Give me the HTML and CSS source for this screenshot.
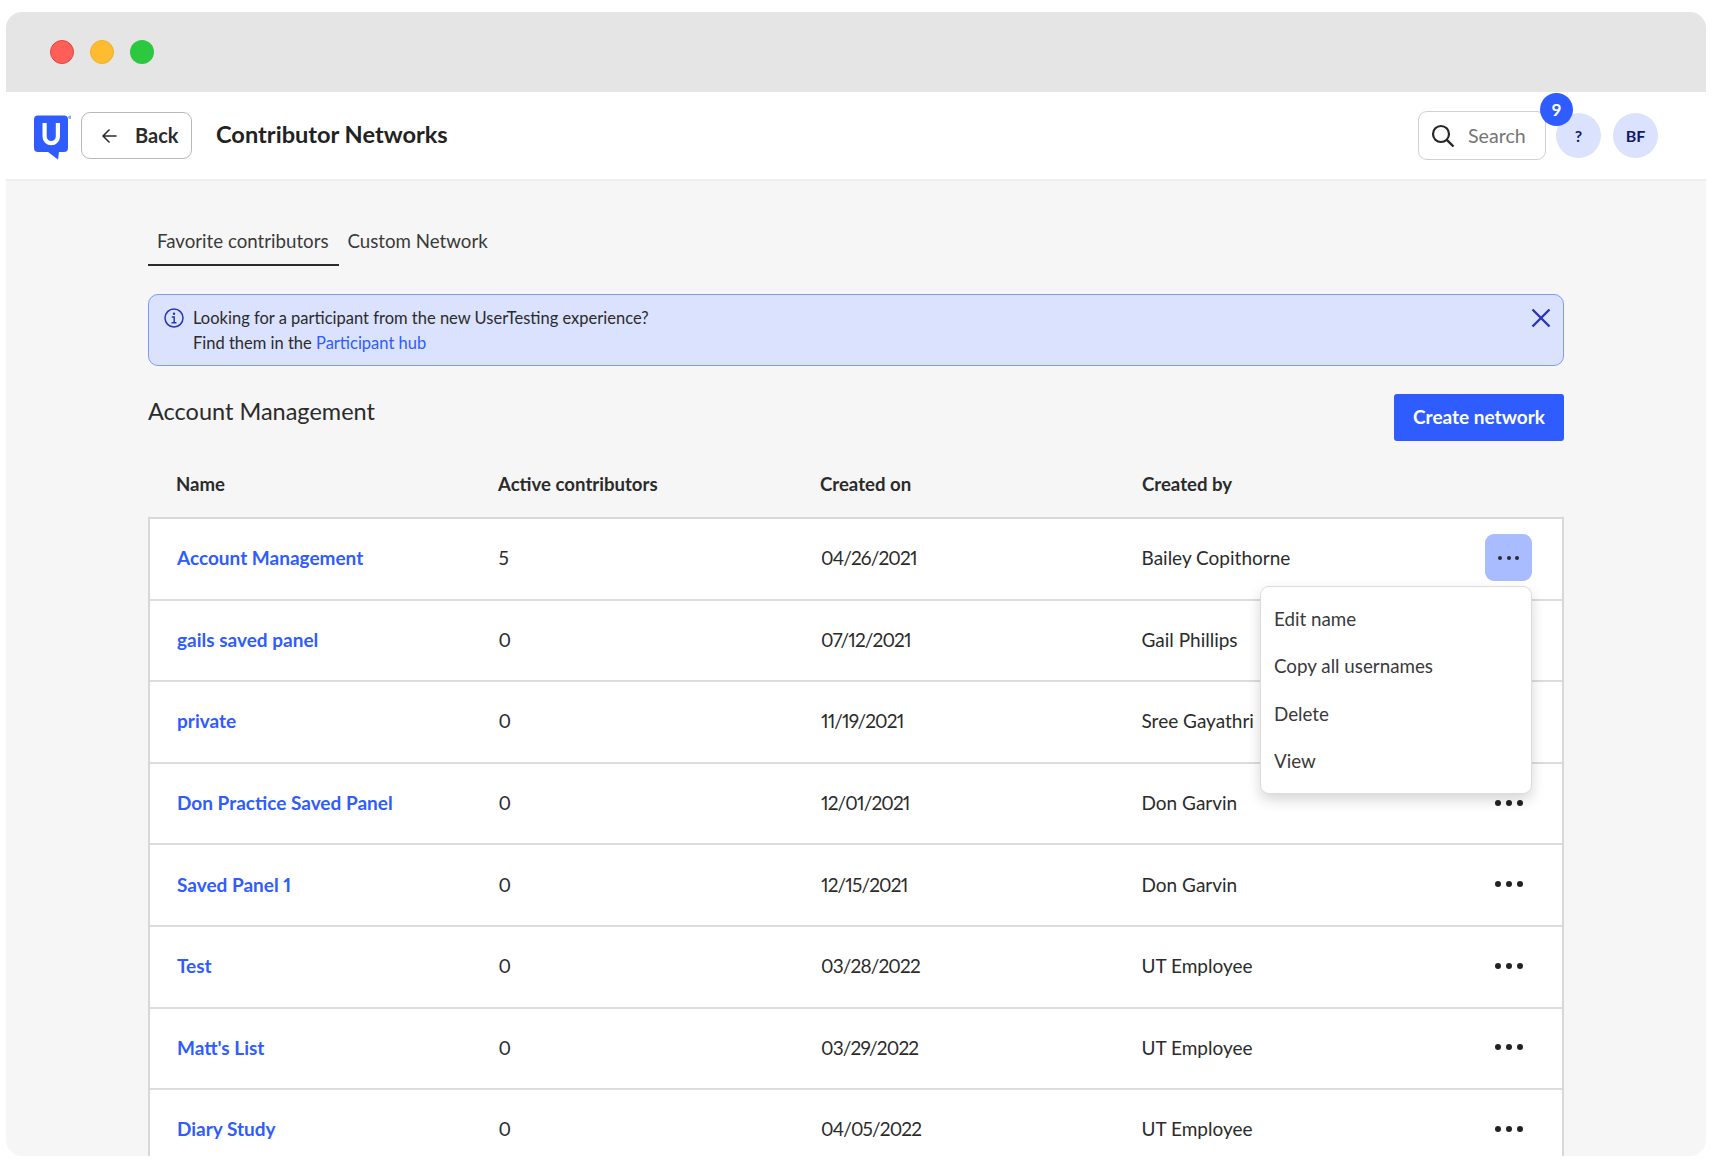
FILE: index.html
```html
<!DOCTYPE html>
<html lang="en">
<head>
    <meta charset="UTF-8">
    <meta name="viewport" content="width=device-width, initial-scale=1.0">
    <title>Contributor Networks</title>
    <link rel="stylesheet" href="styles.css">
</head>
<body>
    <div class="window">
        <div class="titlebar">
            <span class="light red"></span>
            <span class="light yellow"></span>
            <span class="light green"></span>
        </div>

        <header class="topbar">
            <svg class="logo" width="38" height="46" viewBox="0 0 38 46">
                <path fill="#2f5cff" d="M5 .5h26a4 4 0 0 1 4 4V33a4 4 0 0 1-4 4h-5l-1 7.500L15 37H5a4 4 0 0 1-4-4V4.500a4 4 0 0 1 4-4z"/>
                <path fill="none" stroke="#fff" stroke-width="4.200" d="M11.600 8v13.500a6.650 6.650 0 0 0 13.300 0V8"/>
                <circle cx="37" cy="2.300" r="1.800" fill="#8fa6ff"/>
            </svg>
            <button class="back-btn">
                <svg width="18" height="16" viewBox="0 0 18 16"><path fill="none" stroke="#2b2b2b" stroke-width="1.500" d="M15.500 8H2M8.500 1.500 2 8l6.500 6.500"/></svg>
                <span>Back</span>
            </button>
            <h1>Contributor Networks</h1>
            <div class="topbar-right">
                <div class="search">
                    <svg width="24" height="24" viewBox="0 0 24 24"><circle cx="10" cy="10" r="8" fill="none" stroke="#262626" stroke-width="2.200"/><path stroke="#262626" stroke-width="2.400" d="M15.800 15.800 22.500 22.500"/></svg>
                    <span>Search</span>
                </div>
                <div class="avatar">?</div>
                <div class="avatar">BF</div>
                <div class="badge">9</div>
            </div>
        </header>

        <main class="content">
            <nav class="tabs">
                <a class="tab active">Favorite contributors</a>
                <a class="tab">Custom Network</a>
            </nav>

            <div class="banner">
                <svg class="info" width="20" height="20" viewBox="0 0 20 20"><circle cx="10" cy="10" r="9" fill="none" stroke="#2536b8" stroke-width="1.500"/><circle cx="10" cy="5.800" r="1.200" fill="#2536b8"/><path fill="none" stroke="#2536b8" stroke-width="1.500" d="M7.800 9h2.400v5.500M7.500 14.700h5"/></svg>
                <p>Looking for a participant from the new UserTesting experience?<br>Find them in the <a>Participant hub</a></p>
                <svg class="close" width="20" height="20" viewBox="0 0 20 20"><path fill="none" stroke="#2536b8" stroke-width="2.400" d="M1.500 1.500l17 17M18.500 1.500l-17 17"/></svg>
            </div>

            <div class="section-head">
                <h2>Account Management</h2>
                <button class="create-btn">Create network</button>
            </div>

            <div class="row head">
                <div>Name</div>
                <div>Active contributors</div>
                <div>Created on</div>
                <div>Created by</div>
            </div>

            <div class="table">
                <div class="row">
                    <a class="name">Account Management</a><div>5</div><div class="date">04/26/2021</div><div>Bailey Copithorne</div>
                    <div class="more open"><i></i><i></i><i></i></div>
                </div>
                <div class="row">
                    <a class="name">gails saved panel</a><div>0</div><div class="date">07/12/2021</div><div>Gail Phillips</div>
                    <div class="more"><i></i><i></i><i></i></div>
                </div>
                <div class="row">
                    <a class="name">private</a><div>0</div><div class="date">11/19/2021</div><div>Sree Gayathri</div>
                    <div class="more"><i></i><i></i><i></i></div>
                </div>
                <div class="row">
                    <a class="name">Don Practice Saved Panel</a><div>0</div><div class="date">12/01/2021</div><div>Don Garvin</div>
                    <div class="more"><i></i><i></i><i></i></div>
                </div>
                <div class="row">
                    <a class="name">Saved Panel 1</a><div>0</div><div class="date">12/15/2021</div><div>Don Garvin</div>
                    <div class="more"><i></i><i></i><i></i></div>
                </div>
                <div class="row">
                    <a class="name">Test</a><div>0</div><div class="date">03/28/2022</div><div>UT Employee</div>
                    <div class="more"><i></i><i></i><i></i></div>
                </div>
                <div class="row">
                    <a class="name">Matt's List</a><div>0</div><div class="date">03/29/2022</div><div>UT Employee</div>
                    <div class="more"><i></i><i></i><i></i></div>
                </div>
                <div class="row">
                    <a class="name">Diary Study</a><div>0</div><div class="date">04/05/2022</div><div>UT Employee</div>
                    <div class="more"><i></i><i></i><i></i></div>
                </div>

                <ul class="menu">
                    <li>Edit name</li>
                    <li>Copy all usernames</li>
                    <li>Delete</li>
                    <li>View</li>
                </ul>
            </div>
        </main>
    </div>
</body>
</html>
```

FILE: styles.css
```css
* {
    box-sizing: border-box;
}
html, body {
    height: 100%;
}
body {
    margin: 0;
    padding: 12px 6px;
    background-color: white;
    color: #2b2b2b;
    font-family: Lato, "Open Sans", sans-serif;
    font-size: 19px;
    font-variant-numeric: proportional-nums;
    overflow: hidden;
}
.window {
    height: 1144px;
    border-radius: 16px;
    overflow: hidden;
    background-color: #f6f6f6;
}
.titlebar {
    height: 80px;
    background-color: #e5e5e5;
    display: flex;
    align-items: center;
    gap: 16px;
    padding-left: 44px;
}
.light {
    width: 24px;
    height: 24px;
    border-radius: 50%;
}
.red {
    background-color: #ff5f57;
    border: 1px solid #e0443e;
}
.yellow {
    background-color: #febc2e;
    border: 1px solid #f0b02a;
}
.green {
    background-color: #2bc840;
}

.topbar {
    height: 89px;
    background-color: white;
    border-bottom: 2px solid #efefef;
    display: flex;
    align-items: center;
    padding: 0 48px 0 27px;
}
.logo {
    margin-top: 4px;
}
.back-btn {
    width: 111px;
    height: 47px;
    margin-left: 10px;
    background-color: white;
    border: 1.5px solid #b8b8b8;
    border-radius: 9px;
    display: flex;
    align-items: center;
    gap: 16px;
    padding: 0 0 0 19px;
    font-family: inherit;
    font-size: 20px;
    font-weight: 700;
    color: #2b2b2b;
}
.back-btn span {
    margin-top: -1px;
}
h1 {
    margin: 0 0 4px 24px;
    font-size: 23.600px;
    font-weight: 700;
    color: #222;
}
.topbar-right {
    margin-left: auto;
    display: flex;
    align-items: center;
    position: relative;
}
.search {
    width: 128px;
    height: 49px;
    background-color: white;
    border: 1.5px solid #d0d0d0;
    border-radius: 9px;
    display: flex;
    align-items: center;
    gap: 13px;
    padding-left: 12px;
    color: #757575;
    font-size: 19.600px;
}
.search span {
    margin-top: -1px;
}
.avatar {
    width: 45px;
    height: 45px;
    margin-left: 10px;
    border-radius: 50%;
    background-color: #dbe2fd;
    color: #101b66;
    font-size: 16px;
    font-weight: 700;
    display: flex;
    align-items: center;
    justify-content: center;
}
.avatar + .avatar {
    margin-left: 12px;
}
.badge {
    position: absolute;
    top: -18px;
    left: 122px;
    width: 33px;
    height: 33px;
    border-radius: 50%;
    background-color: #2f5cff;
    color: white;
    font-size: 17px;
    font-weight: 700;
    display: flex;
    align-items: center;
    justify-content: center;
}

.content {
    padding: 0 142px;
}
.tabs {
    display: flex;
    padding-top: 41px;
}
.tab {
    height: 44px;
    padding: 8px 10px 0 9px;
    color: #3a3a3a;
    font-size: 18.700px;
}
.tab.active {
    border-bottom: 2.500px solid #2b2b2b;
}
.banner {
    margin-top: 28px;
    height: 72px;
    background-color: #dbe2fd;
    border: 1.500px solid #7d9bff;
    border-radius: 10px;
    display: flex;
    padding: 11px 12px 0 15px;
}
.banner p {
    margin: 0 0 0 9px;
    flex: 1;
    font-size: 16.500px;
    line-height: 25px;
    color: #2b2b2b;
}
.banner a {
    color: #2f5cff;
}
.info {
    margin-top: 2px;
}
.close {
    margin-top: 2px;
}
.section-head {
    display: flex;
    justify-content: space-between;
    margin-top: 28px;
}
h2 {
    margin: 3px 0 0;
    font-size: 23.500px;
    font-weight: 400;
    color: #2b2b2b;
}
.create-btn {
    width: 170px;
    height: 47px;
    background-color: #2f5cff;
    border: none;
    border-radius: 3px;
    color: white;
    font-family: inherit;
    font-size: 19px;
    font-weight: 700;
    padding-bottom: 3px;
}

.row {
    display: grid;
    grid-template-columns: 321.500px 321.500px 321.500px 1fr 47px;
    align-items: center;
    height: 81.600px;
    padding: 0 30px 2px 27px;
    border-bottom: 2px solid #dcdcdc;
    background-color: white;
}
.row.head {
    height: 76px;
    grid-template-columns: 322px 322px 322px 1fr 47px;
    background-color: transparent;
    border-bottom: none;
    font-size: 18.600px;
    font-weight: 700;
    padding: 10px 30px 0 28px;
}
.table {
    position: relative;
    border: 2px solid #d8d8d8;
    border-bottom: none;
}
.name {
    color: #2f5cff;
    font-weight: 700;
}
.date {
    letter-spacing: -0.850px;
    margin-left: 1px;
}
.more {
    width: 47px;
    height: 47px;
    border-radius: 9px;
    display: flex;
    align-items: center;
    justify-content: center;
    gap: 5px;
}
.more i {
    width: 6px;
    height: 6px;
    border-radius: 50%;
    background-color: #222;
}
.more.open {
    background-color: #a8bcff;
    gap: 4.500px;
}
.more.open i {
    width: 4px;
    height: 4px;
    background-color: #2b2b2b;
}
.menu {
    position: absolute;
    top: 67px;
    right: 30px;
    width: 272px;
    height: 208px;
    margin: 0;
    padding: 8px 0 0 13px;
    list-style: none;
    background-color: white;
    border: 1.500px solid #dcdcdc;
    border-radius: 9px;
    box-shadow: 0 6px 14px rgba(0, 0, 0, 0.16);
    font-size: 18.800px;
}
.menu li {
    height: 47.300px;
    line-height: 47px;
    color: #3a3a3a;
}
```
